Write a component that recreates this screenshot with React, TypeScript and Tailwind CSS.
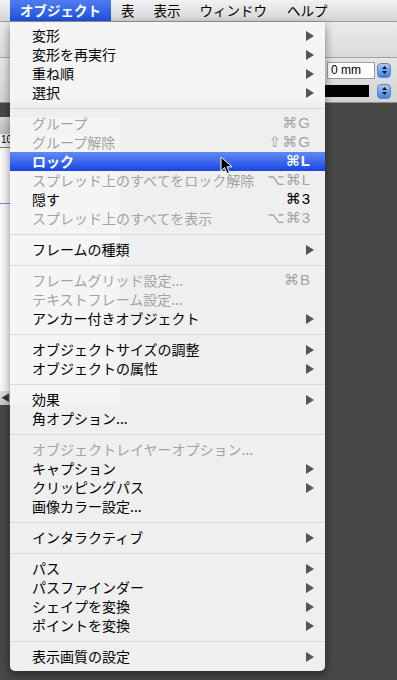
import React from 'react';

type Item = {
  label: string;
  sub?: boolean;
  sc?: string;
  disabled?: boolean;
  selected?: boolean;
};

const groups: Item[][] = [
  [
    { label: '変形', sub: true },
    { label: '変形を再実行', sub: true },
    { label: '重ね順', sub: true },
    { label: '選択', sub: true },
  ],
  [
    { label: 'グループ', sc: '⌘G', disabled: true },
    { label: 'グループ解除', sc: '⇧⌘G', disabled: true },
    { label: 'ロック', sc: '⌘L', selected: true },
    { label: 'スプレッド上のすべてをロック解除', sc: '⌥⌘L', disabled: true },
    { label: '隠す', sc: '⌘3' },
    { label: 'スプレッド上のすべてを表示', sc: '⌥⌘3', disabled: true },
  ],
  [{ label: 'フレームの種類', sub: true }],
  [
    { label: 'フレームグリッド設定...', sc: '⌘B', disabled: true },
    { label: 'テキストフレーム設定...', disabled: true },
    { label: 'アンカー付きオブジェクト', sub: true },
  ],
  [
    { label: 'オブジェクトサイズの調整', sub: true },
    { label: 'オブジェクトの属性', sub: true },
  ],
  [
    { label: '効果', sub: true },
    { label: '角オプション...' },
  ],
  [
    { label: 'オブジェクトレイヤーオプション...', disabled: true },
    { label: 'キャプション', sub: true },
    { label: 'クリッピングパス', sub: true },
    { label: '画像カラー設定...' },
  ],
  [{ label: 'インタラクティブ', sub: true }],
  [
    { label: 'パス', sub: true },
    { label: 'パスファインダー', sub: true },
    { label: 'シェイプを変換', sub: true },
    { label: 'ポイントを変換', sub: true },
  ],
  [{ label: '表示画質の設定', sub: true }],
];

const Arrow = () => (
  <svg width="8" height="10" viewBox="0 0 8 10">
    <polygon points="0,0 8,5 0,10" fill="#555" />
  </svg>
);

const Stepper = () => (
  <div className="w-[14px] h-[15px] rounded-[4px] bg-gradient-to-b from-[#a9c6f5] to-[#3f7fe0] border border-[#5a84c8] flex flex-col items-center justify-center gap-[2px]">
    <svg width="5" height="3" viewBox="0 0 5 3"><polygon points="0,3 2.5,0 5,3" fill="#111" /></svg>
    <svg width="5" height="3" viewBox="0 0 5 3"><polygon points="0,0 5,0 2.5,3" fill="#111" /></svg>
  </div>
);

function MenuRow({ item }: { item: Item }) {
  const color = item.selected
    ? 'text-white font-bold bg-gradient-to-b from-[#6288f4] to-[#1a43e6]'
    : item.disabled
      ? 'text-[#a3a3a3]'
      : 'text-black';
  return (
    <div className={`h-[19px] flex items-center pl-[22px] pr-[11px] ${color}`}>
      <span className="flex-1 whitespace-nowrap">{item.label}</span>
      {item.sub && <Arrow />}
      {item.sc && (
        <span className="pr-[3px] font-['Liberation_Sans','DejaVu_Sans',sans-serif] text-[15px] tracking-[1px]">{item.sc}</span>
      )}
    </div>
  );
}

export default function App() {
  return (
    <div className="relative w-[397px] h-[680px] overflow-hidden bg-[#474747] font-['Noto_Sans_CJK_JP',sans-serif] flex flex-col">
      {/* menu bar */}
      <div className="h-[22px] flex items-center text-[13.5px] text-black bg-gradient-to-b from-[#f2f2f2] to-[#d6d6d6] border-b border-[#9a9a9a]">
        <div className="w-[10px]" />
        <div className="h-full flex items-center px-[10px] font-bold text-white bg-gradient-to-b from-[#4f7cf0] to-[#1e4fe0]">
          オブジェクト
        </div>
        <div className="px-[10px]">表</div>
        <div className="px-[9px]">表示</div>
        <div className="px-[10px]">ウィンドウ</div>
        <div className="px-[10px]">ヘルプ</div>
      </div>

      {/* toolbar behind */}
      <div className="h-[36px] bg-gradient-to-b from-[#ececec] to-[#dadada] border-b border-[#a5a5a5]" />
      <div className="h-[45px] bg-gradient-to-b from-[#e6e6e6] to-[#d4d4d4] border-b border-[#8c8c8c] flex flex-col items-end justify-center gap-[5px] pr-[6px]">
        <div className="flex items-center gap-[2px]">
          <div className="w-[48px] h-[17px] bg-white border border-[#9c9c9c] text-[12px] leading-[15px] pl-[3px] text-black font-['Liberation_Sans',sans-serif]">
            0 mm
          </div>
          <Stepper />
        </div>
        <div className="flex items-center gap-[8px]">
          <div className="w-[45px] h-[12px] bg-black" />
          <Stepper />
        </div>
      </div>

      {/* document area behind */}
      <div className="flex-1 flex flex-col">
        <div className="h-[14px]" />
        <div className="w-[120px] h-[288px] flex flex-col bg-[#f7f7f7]">
          <div className="h-[17px] bg-gradient-to-b from-[#d8d8d8] to-[#bdbdbd]" />
          <div className="h-[14px] bg-[#f0f0f0] border-b border-[#777] text-[10px] leading-[12px] pl-[1px] text-black font-['Liberation_Sans',sans-serif]">10</div>
          <div className="h-[55px]" />
          <div className="h-px bg-[#8080e0]" />
          <div className="flex-1" />
          <div className="h-[14px] bg-gradient-to-b from-[#e0e0e0] to-[#c4c4c4] text-[9px] leading-[14px] pl-[1px] text-[#333]">◀</div>
        </div>
      </div>

      {/* dropdown menu */}
      <div className="absolute left-[10px] top-[22px] w-[315px] pt-[4px] pb-[5px] bg-[#f5f5f5]/[0.97] rounded-b-[5px] text-[14px] shadow-[0_3px_10px_rgba(0,0,0,0.45)]">
        {groups.map((g, gi) => (
          <div key={gi}>
            {gi > 0 && (
              <div className="pt-[6px] pb-[5px]">
                <div className="h-px bg-[#d9d9d9]" />
              </div>
            )}
            {g.map((it) => (
              <MenuRow key={it.label} item={it} />
            ))}
          </div>
        ))}
      </div>

      {/* mouse cursor */}
      <svg className="absolute left-[220px] top-[156px]" width="13" height="19" viewBox="0 0 13 19">
        <path d="M1 1 L1 15 L4.5 11.5 L7 17.5 L9.5 16.5 L7 10.8 L12 10.8 Z" fill="#000" stroke="#fff" strokeWidth="1" strokeLinejoin="round" />
      </svg>
    </div>
  );
}
